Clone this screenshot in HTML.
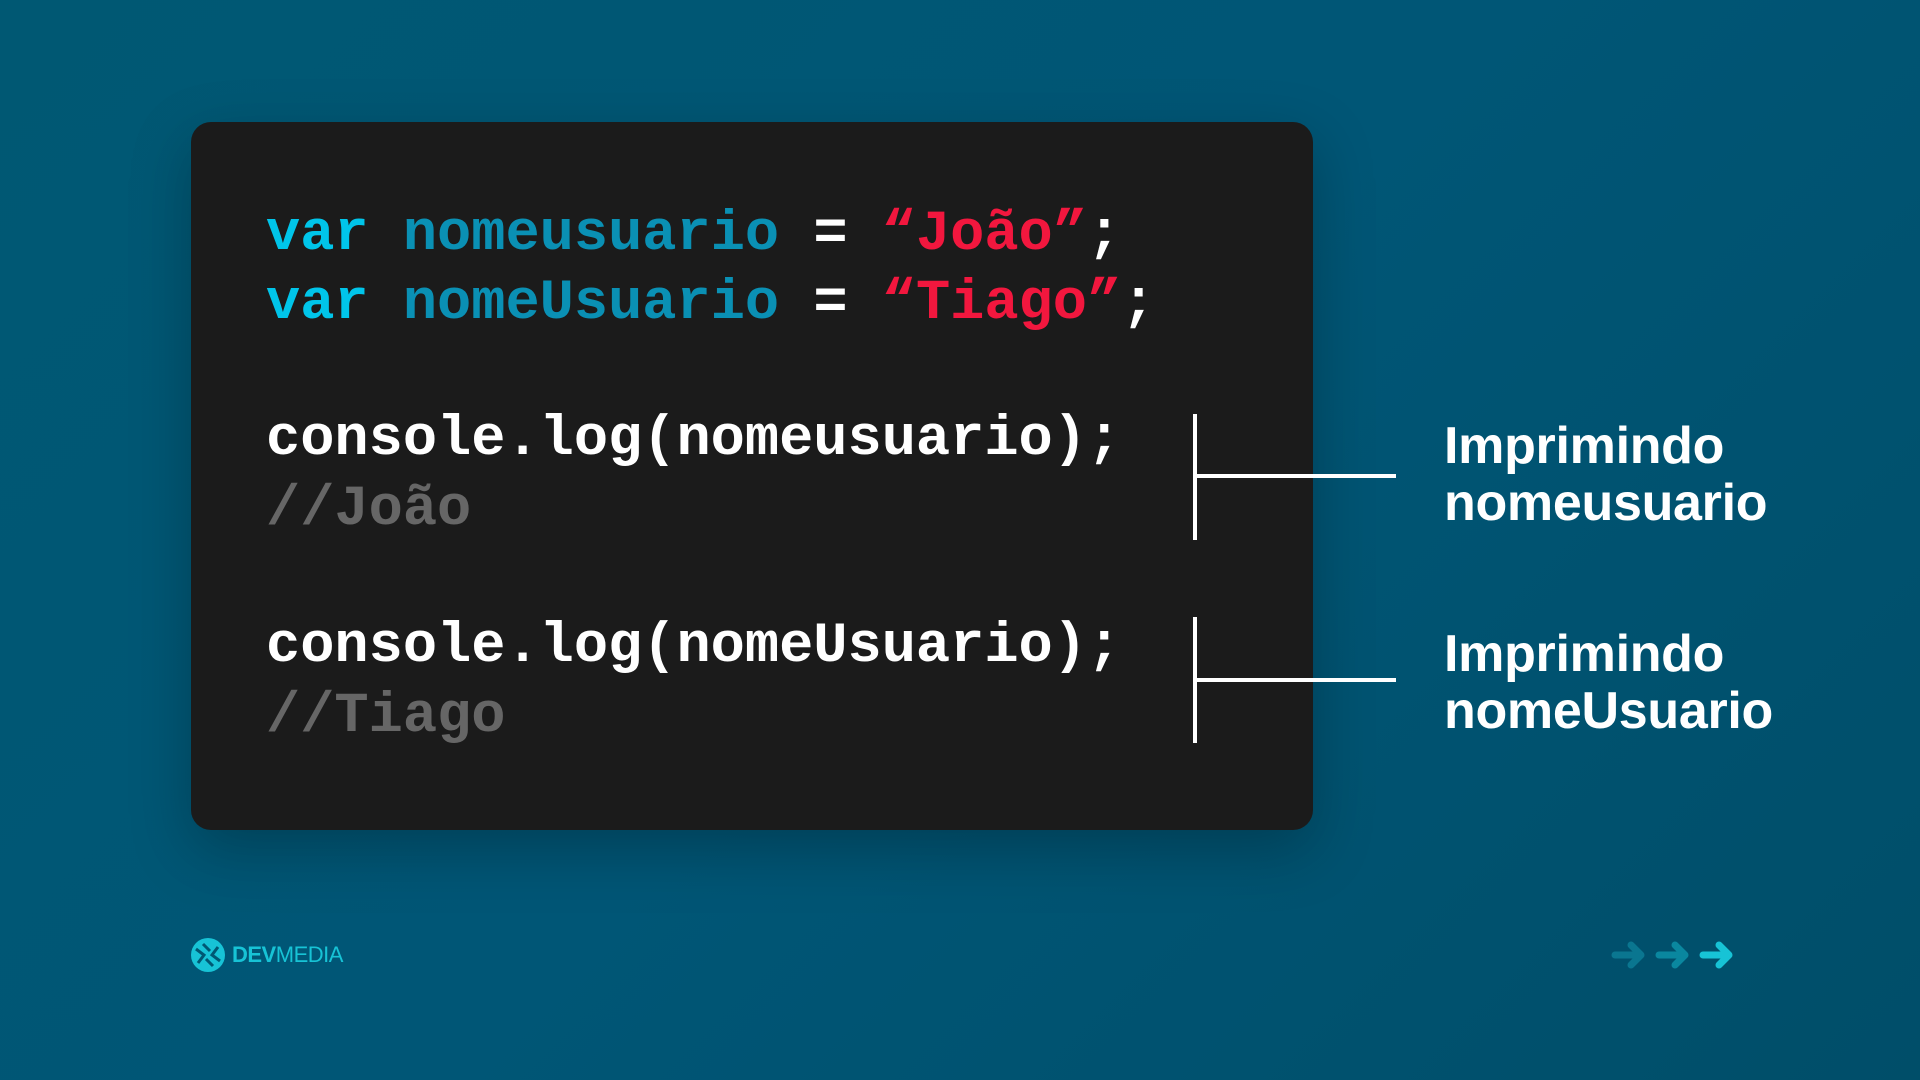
<!DOCTYPE html>
<html><head><meta charset="utf-8"><style>
html,body{margin:0;padding:0}
body{width:1920px;height:1080px;overflow:hidden;position:relative;background:linear-gradient(135deg,#005873 0%,#005676 50%,#004e69 100%);font-family:"Liberation Sans",sans-serif}
.card{position:absolute;left:191px;top:122px;width:1122px;height:708px;background:#1b1b1b;border-radius:20px;box-shadow:0 20px 60px rgba(0,0,0,.25)}
.code{position:absolute;left:266px;font-family:"Liberation Mono",monospace;font-weight:bold;font-size:57px;white-space:pre;line-height:1;color:#fff}
.k{color:#00c5ea}.i{color:#0a90b4}.s{color:#f2173e}.c{color:#666}
.ln{position:absolute;background:#fff}
.lab{position:absolute;left:1444px;color:#fff;font-weight:bold;font-size:52px;line-height:57px;letter-spacing:-0.3px}
</style></head><body>
<div class="card"></div>
<div class="code" style="top:207px"><span class="k">var</span> <span class="i">nomeusuario</span> = <span class="s">“João”</span>;</div>
<div class="code" style="top:276px"><span class="k">var</span> <span class="i">nomeUsuario</span> = <span class="s">“Tiago”</span>;</div>
<div class="code" style="top:412px">console.log(nomeusuario);</div>
<div class="code c" style="top:482px">//João</div>
<div class="code" style="top:619px">console.log(nomeUsuario);</div>
<div class="code c" style="top:689px">//Tiago</div>
<div class="ln" style="left:1193px;top:414px;width:4px;height:126px"></div>
<div class="ln" style="left:1193px;top:474px;width:203px;height:4px"></div>
<div class="ln" style="left:1193px;top:617px;width:4px;height:126px"></div>
<div class="ln" style="left:1193px;top:678px;width:203px;height:4px"></div>
<div class="lab" style="top:418px">Imprimindo<br>nomeusuario</div>
<div class="lab" style="top:626px">Imprimindo<br>nomeUsuario</div>
<svg style="position:absolute;left:190px;top:937px" width="36" height="36" viewBox="0 0 36 36">
<circle cx="18" cy="18" r="17" fill="#17c3d6"/>
<path d="M6 12 L14 18 L8 26 M30 24 L22 18 L28 10 M13 7 L20 14 M23 29 L16 22" stroke="#005873" stroke-width="3" fill="none"/>
</svg>
<div style="position:absolute;left:232px;top:942px;font-size:22px;color:#17c3d6;letter-spacing:-0.5px"><b>DEV</b>MEDIA</div>
<svg style="position:absolute;left:1603px;top:935px" width="130" height="40" viewBox="0 0 130 40">
<g fill="none" stroke-width="7" stroke-linecap="round" stroke-linejoin="round">
<path d="M12 20h26M28 10l10 10-10 10" stroke="#0a7690"/>
<path d="M56 20h26M72 10l10 10-10 10" stroke="#0a879f"/>
<path d="M100 20h26M116 10l10 10-10 10" stroke="#17c3d6"/>
</g></svg>
</body></html>
